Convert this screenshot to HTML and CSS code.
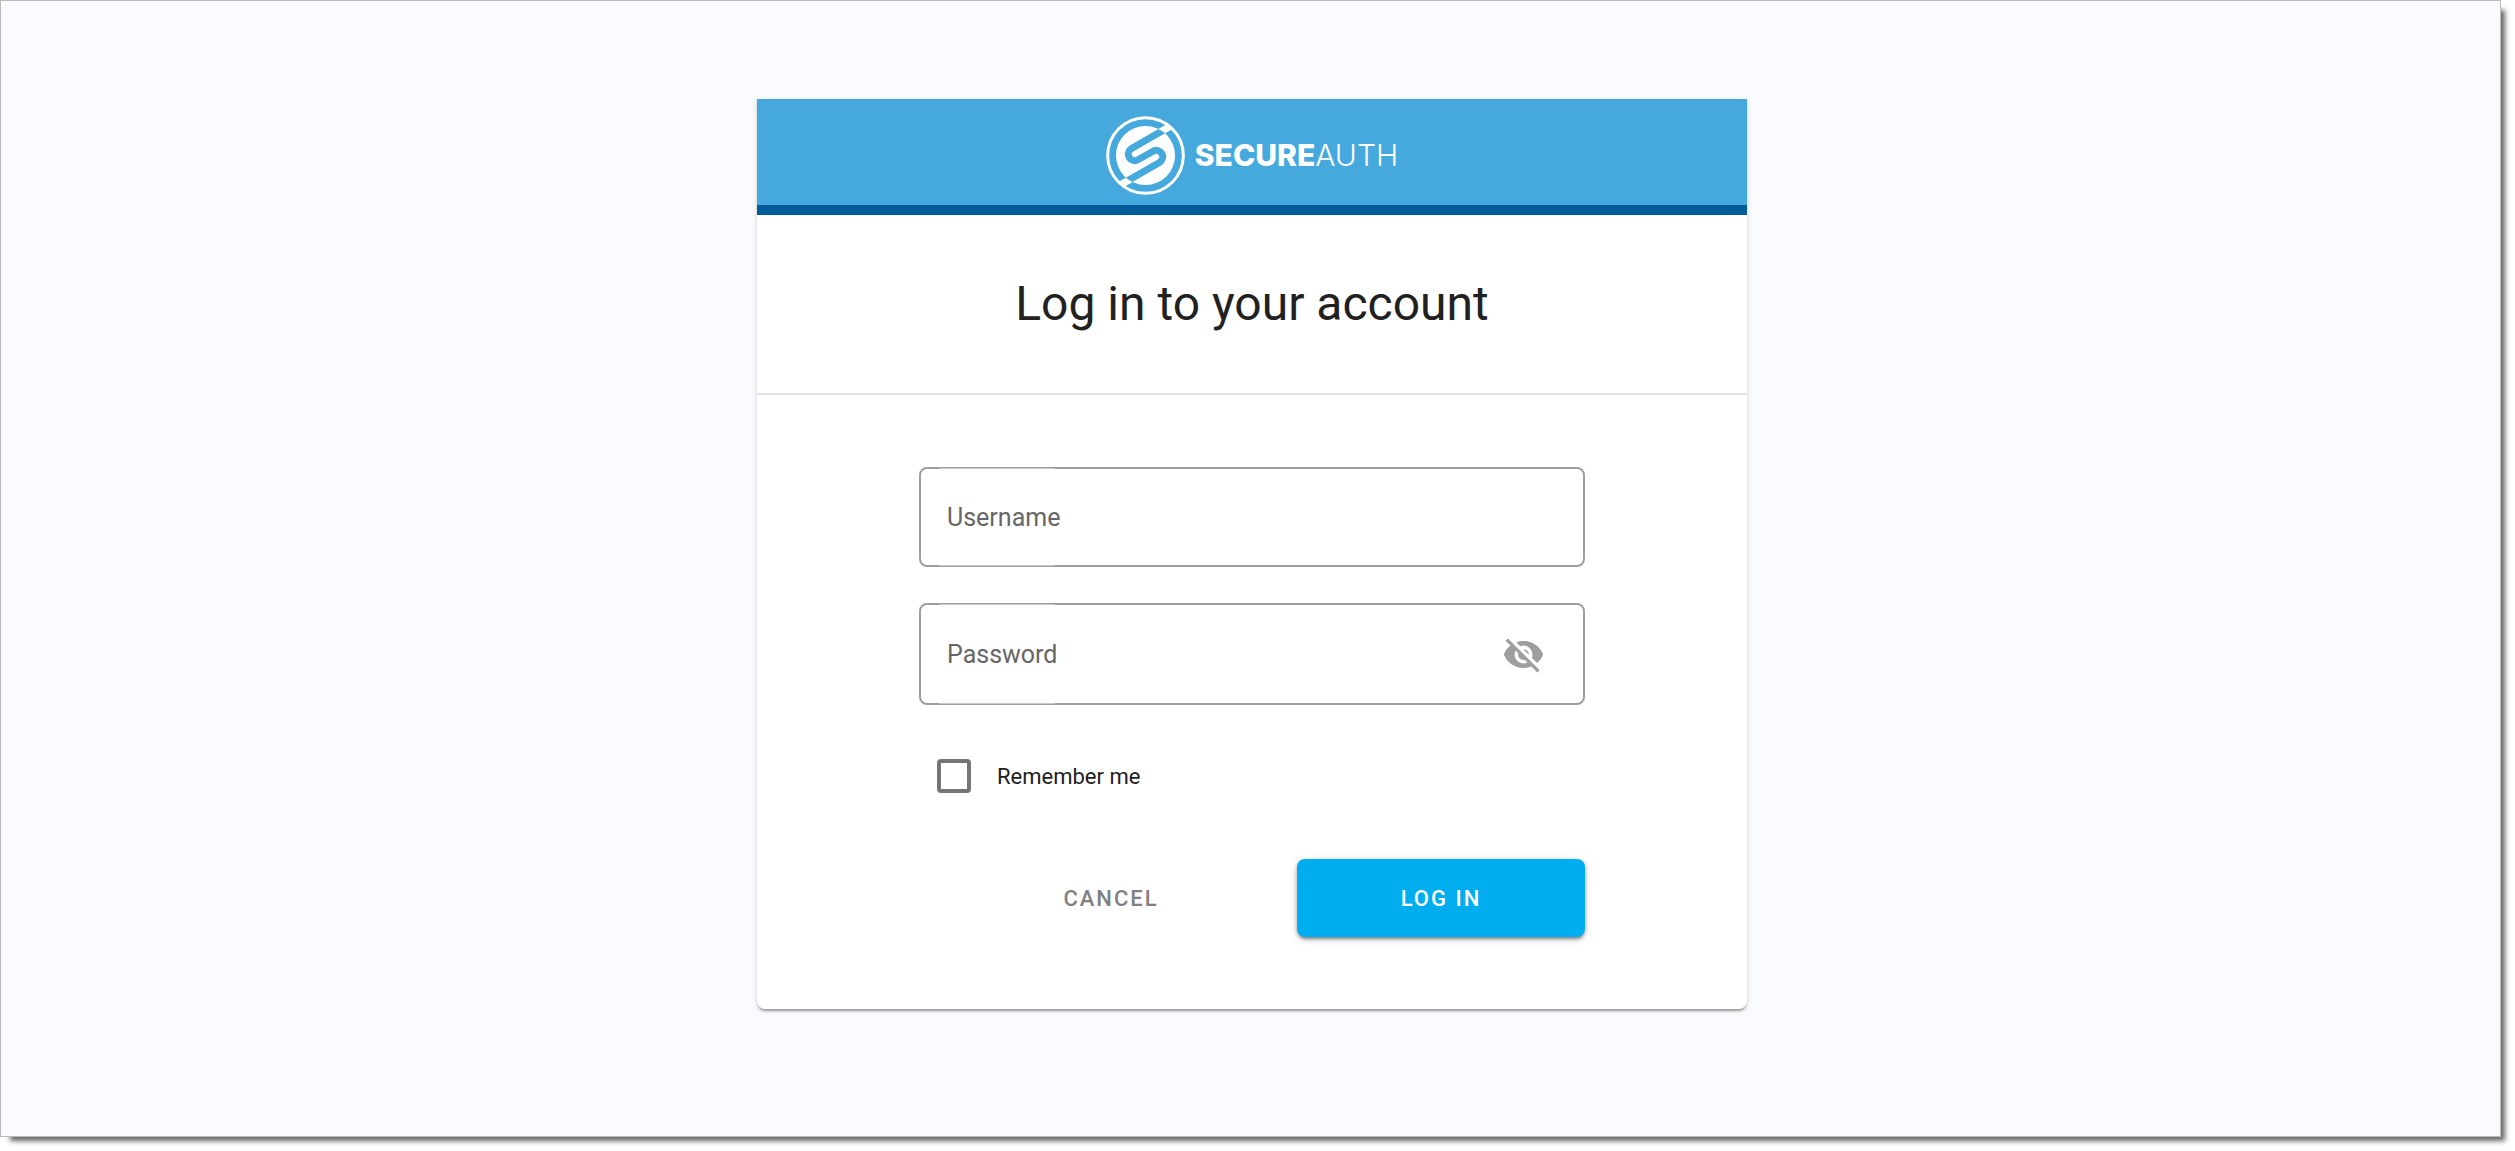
FILE: index.html
```html
<!DOCTYPE html>
<html lang="en">
<head>
    <meta charset="UTF-8">
    <meta name="viewport" content="width=device-width, initial-scale=1.0">
    <title>Log in to your account</title>
    <link rel="stylesheet" href="styles.css">
</head>
<body>
    <div class="page">
        <main class="card">
            <header class="brand">
                <svg class="brand-icon" viewBox="-119 -119 238 238" aria-hidden="true">
                    <defs>
                        <clipPath id="disc"><circle r="89"/></clipPath>
                        <clipPath id="outer"><circle r="114"/></clipPath>
                    </defs>
                    <circle r="114" fill="none" stroke="#fff" stroke-width="9"/>
                    <g clip-path="url(#outer)">
                        <path transform="rotate(-30)" d="M60 -39H120M-60 39H-120" stroke="#fff" stroke-width="21"/>
                    </g>
                    <circle r="89" fill="#fff"/>
                    <g clip-path="url(#disc)">
                        <path transform="rotate(-30)" d="M100 -39H-26A19.500 19.500 0 0 0 -26 0H26A19.500 19.500 0 0 1 26 39H-100" fill="none" stroke="#46a9dd" stroke-width="21"/>
                    </g>
                </svg>
                <span class="brand-name"><b>SECURE</b>AUTH</span>
            </header>

            <h1>Log in to your account</h1>

            <form class="login">
                <div class="field">
                    <input type="text" id="username" placeholder="Username" aria-label="Username">
                </div>
                <div class="field field-password">
                    <input type="password" id="password" placeholder="Password" aria-label="Password">
                    <button type="button" class="toggle" id="togglePassword" aria-label="Show password">
                        <svg viewBox="0 0 24 24" aria-hidden="true">
                            <path d="M11.83,9L15,12.16C15,12.11 15,12.05 15,12A3,3 0 0,0 12,9C11.94,9 11.89,9 11.83,9M7.53,9.8L9.08,11.35C9.03,11.56 9,11.77 9,12A3,3 0 0,0 12,15C12.22,15 12.44,14.97 12.65,14.92L14.2,16.47C13.53,16.8 12.79,17 12,17A5,5 0 0,1 7,12C7,11.21 7.2,10.47 7.53,9.8M2,4.27L4.28,6.55L4.73,7C3.08,8.3 1.78,10 1,12C2.73,16.39 7,19.5 12,19.5C13.55,19.5 15.03,19.2 16.38,18.66L16.81,19.08L19.73,22L21,20.73L3.27,3M12,7A5,5 0 0,1 17,12C17,12.64 16.87,13.26 16.64,13.82L19.57,16.75C21.07,15.5 22.27,13.86 23,12C21.27,7.61 17,4.5 12,4.5C10.6,4.5 9.26,4.75 8,5.2L10.17,7.35C10.74,7.13 11.35,7 12,7Z"/>
                        </svg>
                    </button>
                </div>

                <div class="remember">
                    <input type="checkbox" id="remember">
                    <label for="remember">Remember me</label>
                </div>

                <div class="actions">
                    <button type="button" class="btn">CANCEL</button>
                    <button type="submit" class="btn btn-primary">LOG IN</button>
                </div>
            </form>
        </main>
    </div>

    <script>
        document.getElementById('togglePassword').addEventListener('click', function() {
            const password = document.getElementById('password');
            password.type = password.type === 'password' ? 'text' : 'password';
        });
    </script>
</body>
</html>
```
FILE: styles.css
```css
* {
    box-sizing: border-box;
}
body {
    margin: 0;
    padding: 0 14px 14px 0;
    min-height: 100vh;
    display: flex;
    background-color: white;
    font-family: Roboto, sans-serif;
    color: #212121;
}
.page {
    flex: 1;
    padding: 98px 17px 98px 20px;
    background-color: #f9fbff;
    border: 1px solid #bbb;
    box-shadow: 7px 7px 5px -3px rgba(0, 0, 0, 0.6);
}
.card {
    max-width: 990px;
    margin: 0 auto;
    background-color: white;
    border-radius: 0 0 8px 8px;
    box-shadow: 0 4px 2px -2px rgba(0, 0, 0, 0.2), 0 2px 2px rgba(0, 0, 0, 0.14), 0 2px 6px rgba(0, 0, 0, 0.12);
}
.brand {
    display: flex;
    align-items: center;
    justify-content: center;
    gap: 10px;
    height: 116px;
    padding-top: 6px;
    background-color: #46a9dd;
    border-bottom: 10px solid #005b9a;
    color: white;
}
.brand-icon {
    width: 79px;
    height: 79px;
}
.brand-name {
    font-family: Inter, sans-serif;
    font-size: 30px;
    font-weight: 300;
}
.brand-name b {
    font-weight: 800;
}
h1 {
    margin: 0;
    padding: 60px 20px;
    border-bottom: 2px solid #e4e4e4;
    font-size: 48px;
    font-weight: 400;
    line-height: 58px;
    text-align: center;
}
.login {
    max-width: 706px;
    margin: 0 auto;
    padding: 72px 20px;
}
.field {
    position: relative;
    display: flex;
    align-items: center;
    height: 100px;
    margin-bottom: 36px;
    border: 2px solid #9e9e9e;
    border-radius: 8px;
}
.field-password {
    height: 102px;
}
.field::before {
    content: "";
    position: absolute;
    top: -1px;
    bottom: -1px;
    left: 18px;
    width: 116px;
    border: solid #c8c8c8;
    border-width: 1px 0;
    pointer-events: none;
}
.field input {
    flex: 1;
    min-width: 0;
    height: 100%;
    padding: 0 26px;
    border: none;
    outline: none;
    background: none;
    font-family: inherit;
    font-size: 25px;
    color: #212121;
}
.field input::placeholder {
    color: #666;
    opacity: 1;
}
.toggle {
    padding: 0;
    margin-right: 38px;
    border: none;
    background: none;
    cursor: pointer;
}
.toggle svg {
    display: block;
    width: 43px;
    height: 43px;
    fill: #9e9e9e;
}
.remember {
    display: flex;
    align-items: center;
    gap: 26px;
    margin: 54px 18px 66px;
    font-size: 22px;
}
.remember input {
    appearance: none;
    width: 34px;
    height: 34px;
    margin: 0;
    border: 4px solid #757575;
    border-radius: 4px;
}
.remember input:checked {
    background-color: #00adef;
}
.actions {
    display: flex;
    justify-content: flex-end;
    gap: 42px;
}
.btn {
    width: 288px;
    height: 78px;
    padding: 0;
    border: none;
    border-radius: 8px;
    background: none;
    font-family: inherit;
    font-size: 22px;
    font-weight: 500;
    letter-spacing: 2px;
    color: #808080;
    cursor: pointer;
}
.btn-primary {
    background-color: #00adef;
    color: white;
    box-shadow: 0 4px 2px -2px rgba(0, 0, 0, 0.2), 0 2px 4px rgba(0, 0, 0, 0.3), 0 2px 10px rgba(0, 0, 0, 0.12);
}
```
